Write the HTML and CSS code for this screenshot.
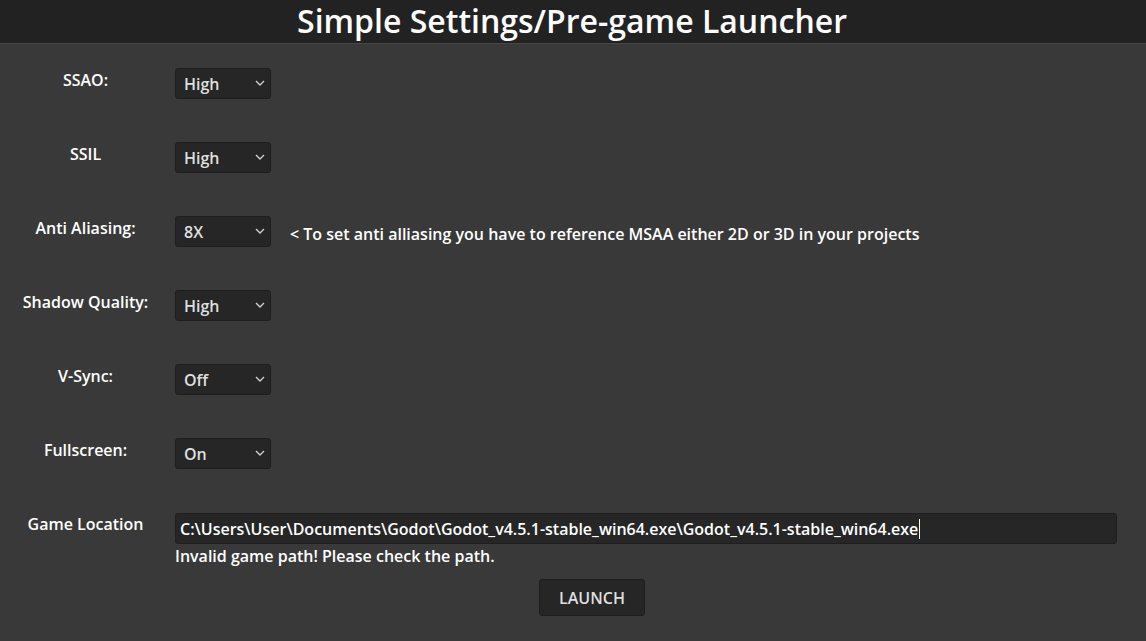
FILE: index.html
```html
<!DOCTYPE html>
<html>
<head>
<meta charset="utf-8">
<link rel="stylesheet" href="styles.css">
</head>
<body>
<header class="topbar"><h1 class="title">Simple Settings/Pre-game Launcher</h1></header>
<main class="settings">
  <div class="row">
    <div class="label">SSAO:</div>
    <div class="select"><span>High</span><svg class="chev" width="10" height="6" viewBox="0 0 10 6"><path d="M1 1 L5 5 L9 1" fill="none" stroke="#cfcfcf" stroke-width="1.4"/></svg></div>
  </div>
  <div class="row">
    <div class="label">SSIL</div>
    <div class="select"><span>High</span><svg class="chev" width="10" height="6" viewBox="0 0 10 6"><path d="M1 1 L5 5 L9 1" fill="none" stroke="#cfcfcf" stroke-width="1.4"/></svg></div>
  </div>
  <div class="row">
    <div class="label">Anti Aliasing:</div>
    <div class="select"><span>8X</span><svg class="chev" width="10" height="6" viewBox="0 0 10 6"><path d="M1 1 L5 5 L9 1" fill="none" stroke="#cfcfcf" stroke-width="1.4"/></svg></div>
    <div class="note">&lt; To set anti alliasing you have to reference MSAA either 2D or 3D in your projects</div>
  </div>
  <div class="row">
    <div class="label">Shadow Quality:</div>
    <div class="select"><span>High</span><svg class="chev" width="10" height="6" viewBox="0 0 10 6"><path d="M1 1 L5 5 L9 1" fill="none" stroke="#cfcfcf" stroke-width="1.4"/></svg></div>
  </div>
  <div class="row">
    <div class="label">V-Sync:</div>
    <div class="select"><span>Off</span><svg class="chev" width="10" height="6" viewBox="0 0 10 6"><path d="M1 1 L5 5 L9 1" fill="none" stroke="#cfcfcf" stroke-width="1.4"/></svg></div>
  </div>
  <div class="row">
    <div class="label">Fullscreen:</div>
    <div class="select"><span>On</span><svg class="chev" width="10" height="6" viewBox="0 0 10 6"><path d="M1 1 L5 5 L9 1" fill="none" stroke="#cfcfcf" stroke-width="1.4"/></svg></div>
  </div>
  <div class="row game">
    <div class="label game-label">Game Location</div>
    <div class="gamecol">
      <div class="input"><span>C:\Users\User\Documents\Godot\Godot_v4.5.1-stable_win64.exe\Godot_v4.5.1-stable_win64.exe</span><span class="caret"></span></div>
      <div class="error">Invalid game path! Please check the path.</div>
    </div>
  </div>
  <div class="launchrow"><button class="launch">LAUNCH</button></div>
</main>
</body>
</html>
```
FILE: styles.css
```css
* { box-sizing: border-box; }
html, body { margin: 0; padding: 0; }
body {
  width: 1146px;
  height: 641px;
  overflow: hidden;
  background: #393939;
  font-family: "Open Sans", "Noto Sans", sans-serif;
  font-weight: 600;
  color: #ffffff;
  font-size: 16px;
}
.topbar {
  height: 44px;
  background: #222222;
  border-bottom: 1px solid #474747;
  display: flex;
  justify-content: center;
  align-items: center;
}
.title {
  margin: 0;
  font-size: 32px;
  font-weight: 600;
  line-height: 40px;
  color: #ffffff;
  padding-bottom: 2px;
  padding-right: 2px;
}
.settings {
  padding-top: 24px;
  display: flex;
  flex-direction: column;
  gap: 43px;
}
.row {
  display: flex;
  align-items: flex-start;
  height: 31px;
}
.label {
  width: 171px;
  margin-right: 4px;
  text-align: center;
  line-height: 24px;
}
.select {
  width: 96px;
  height: 31px;
  background: #262626;
  border: 1px solid #1e1e1e;
  border-radius: 3px;
  display: flex;
  align-items: center;
  justify-content: space-between;
  padding: 0 5px 0 8px;
  color: #dfdfdf;
}
.select span { padding-top: 0; }
.chev { margin-bottom: 1px; }
.note {
  margin-left: 19px;
  line-height: 31px;
  padding-top: 3px;
  color: #ffffff;
}
.row.game { height: auto; margin-top: 1px; }
.game-label { margin-top: -1px; }
.gamecol { display: flex; flex-direction: column; }
.input {
  width: 942px;
  height: 31px;
  background: #262626;
  border: 1px solid #1e1e1e;
  border-radius: 3px;
  display: flex;
  align-items: center;
  padding-left: 4px;
  color: #ffffff;
}
.caret {
  display: inline-block;
  width: 1px;
  height: 20px;
  background: #ffffff;
  margin-left: 1px;
}
.error {
  line-height: 24px;
  color: #ffffff;
}
.launchrow {
  margin-top: -32px;
  padding-left: 539px;
}
.launch {
  width: 106px;
  height: 37px;
  background: #262626;
  border: 1px solid #1e1e1e;
  border-radius: 3px;
  color: #dfdfdf;
  font-family: "Open Sans", "Noto Sans", sans-serif;
  font-weight: 600;
  font-size: 16px;
  padding: 0;
}
```
